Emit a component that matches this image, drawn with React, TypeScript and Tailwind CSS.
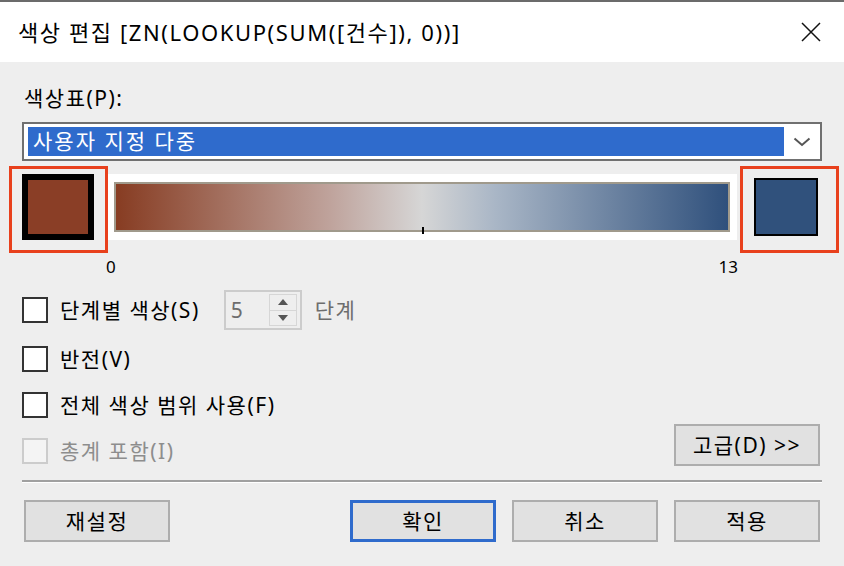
import React from "react";

const font = "font-['Noto_Sans','Noto_Sans_CJK_KR',sans-serif]";

function CheckBox({ label, disabled }: { label: string; disabled?: boolean }) {
  return (
    <label className="flex items-center gap-[12px]">
      <span
        className={`w-[26px] h-[26px] border-2 ${
          disabled ? "border-[#cccccc] bg-[#f4f4f4]" : "border-[#333333] bg-white"
        }`}
      />
      <span className={disabled ? "text-[#8d8d8d]" : "text-black"}>{label}</span>
    </label>
  );
}

function Button({ label, primary, className = "" }: { label: string; primary?: boolean; className?: string }) {
  return (
    <button
      className={`w-[146px] h-[42px] bg-[#e1e1e1] flex items-center justify-center text-black ${
        primary ? "border-[3px] border-[#2f6bcc]" : "border-2 border-[#adadad]"
      } ${className}`}
    >
      {label}
    </button>
  );
}

export default function App() {
  return (
    <div className={`w-[844px] h-[566px] bg-[#eeeeee] flex flex-col border-t-2 border-[#6b6b6b] text-[21px] leading-none tracking-[1.5px] ${font}`}>
      {/* title bar */}
      <div className="h-[60px] bg-white flex items-center justify-between pl-[18px] pr-[22px]">
        <span className="text-black text-[22px] tracking-[1.6px]">색상 편집 [ZN(LOOKUP(SUM([건수]), 0))]</span>
        <svg width="20" height="20" viewBox="0 0 20 20" className="mr-[1px]">
          <path d="M1 1 L19 19 M19 1 L1 19" stroke="#111" strokeWidth="1.5" />
        </svg>
      </div>

      <div className="flex flex-col px-[22px] pt-[14px]">
        <div className="h-[44px] flex items-center pl-[2px]">색상표(P):</div>

        {/* palette select */}
        <div className="mt-[2px] h-[39px] border-2 border-[#707070] bg-white flex items-stretch py-[3px] pl-[4px]">
          <div className="w-[756px] bg-[#2f6bcc] text-white flex items-center pl-[5px] tracking-[2px]">사용자 지정 다중</div>
          <div className="flex-1 flex items-center justify-center">
            <svg width="18" height="10" viewBox="0 0 18 10">
              <path d="M1.5 1.5 L9 8 L16.5 1.5" fill="none" stroke="#555" strokeWidth="2" />
            </svg>
          </div>
        </div>

        {/* colour ramp */}
        <div className="relative mt-[13px] flex items-center">
          <div className="w-[72px] h-[66px] border-[6px] border-black bg-[#8a3e26]" />
          <div className="ml-[14px] w-[629px] h-[66px] bg-white pl-[6px] pr-[7px] py-[8px]">
            <div className="relative h-full border-2 border-[#a09a8c] bg-[linear-gradient(to_right,#873c22,#bfa39c_35%,#d6d6d6_50%,#a9b6c6_62%,#2f507c)]">
              <div className="absolute left-[306px] bottom-[-4px] w-[2px] h-[7px] bg-black" />
            </div>
          </div>
          <div className="ml-[17px] w-[64px] h-[58px] border-2 border-black bg-[#30517c]" />
          <div className="absolute left-[-13px] top-[-8px] w-[99px] h-[87px] border-[3px] border-[#e8401c]" />
          <div className="absolute left-[718px] top-[-8px] w-[99px] h-[87px] border-[3px] border-[#e8401c]" />
        </div>

        <div className="h-[32px] mt-[10px] flex items-center text-[17px] tracking-normal">
          <span className="ml-[84px]">0</span>
          <span className="ml-auto mr-[84px]">13</span>
        </div>

        <div className="mt-[8px] h-[40px] flex items-center">
          <CheckBox label="단계별 색상(S)" />
          <div className="ml-[24px] w-[78px] h-[40px] border-2 border-[#cccccc] bg-[#eeeeee] flex items-center justify-between pl-[5px] pr-[3px]">
            <span className="text-[#6d6d6d]">5</span>
            <div className="flex flex-col w-[28px] h-[32px] border border-[#d6d6d6]">
              <div className="flex-1 flex items-center justify-center border-b border-[#d6d6d6]">
                <svg width="10" height="6" viewBox="0 0 10 6"><path d="M0 6 L5 0 L10 6 Z" fill="#555" /></svg>
              </div>
              <div className="flex-1 flex items-center justify-center">
                <svg width="10" height="6" viewBox="0 0 10 6"><path d="M0 0 L5 6 L10 0 Z" fill="#555" /></svg>
              </div>
            </div>
          </div>
          <span className="ml-[13px] text-[#6d6d6d]">단계</span>
        </div>

        <div className="mt-[9px] h-[40px] flex items-center">
          <CheckBox label="반전(V)" />
        </div>

        <div className="mt-[7px] h-[38px] flex items-center">
          <CheckBox label="전체 색상 범위 사용(F)" />
        </div>

        <div className="h-[42px] flex items-start justify-between">
          <div className="mt-[14px]">
            <CheckBox label="총계 포함(I)" disabled />
          </div>
          <Button label="고급(D) >>" className="mr-[2px]" />
        </div>

        <div className="mt-[14px] h-[3px] border-t-2 border-[#a0a0a0] bg-white" />

        <div className="mt-[17px] flex items-center gap-[16px] px-[2px]">
          <Button label="재설정" />
          <div className="flex-1" />
          <Button label="확인" primary />
          <Button label="취소" />
          <Button label="적용" />
        </div>
      </div>
    </div>
  );
}
